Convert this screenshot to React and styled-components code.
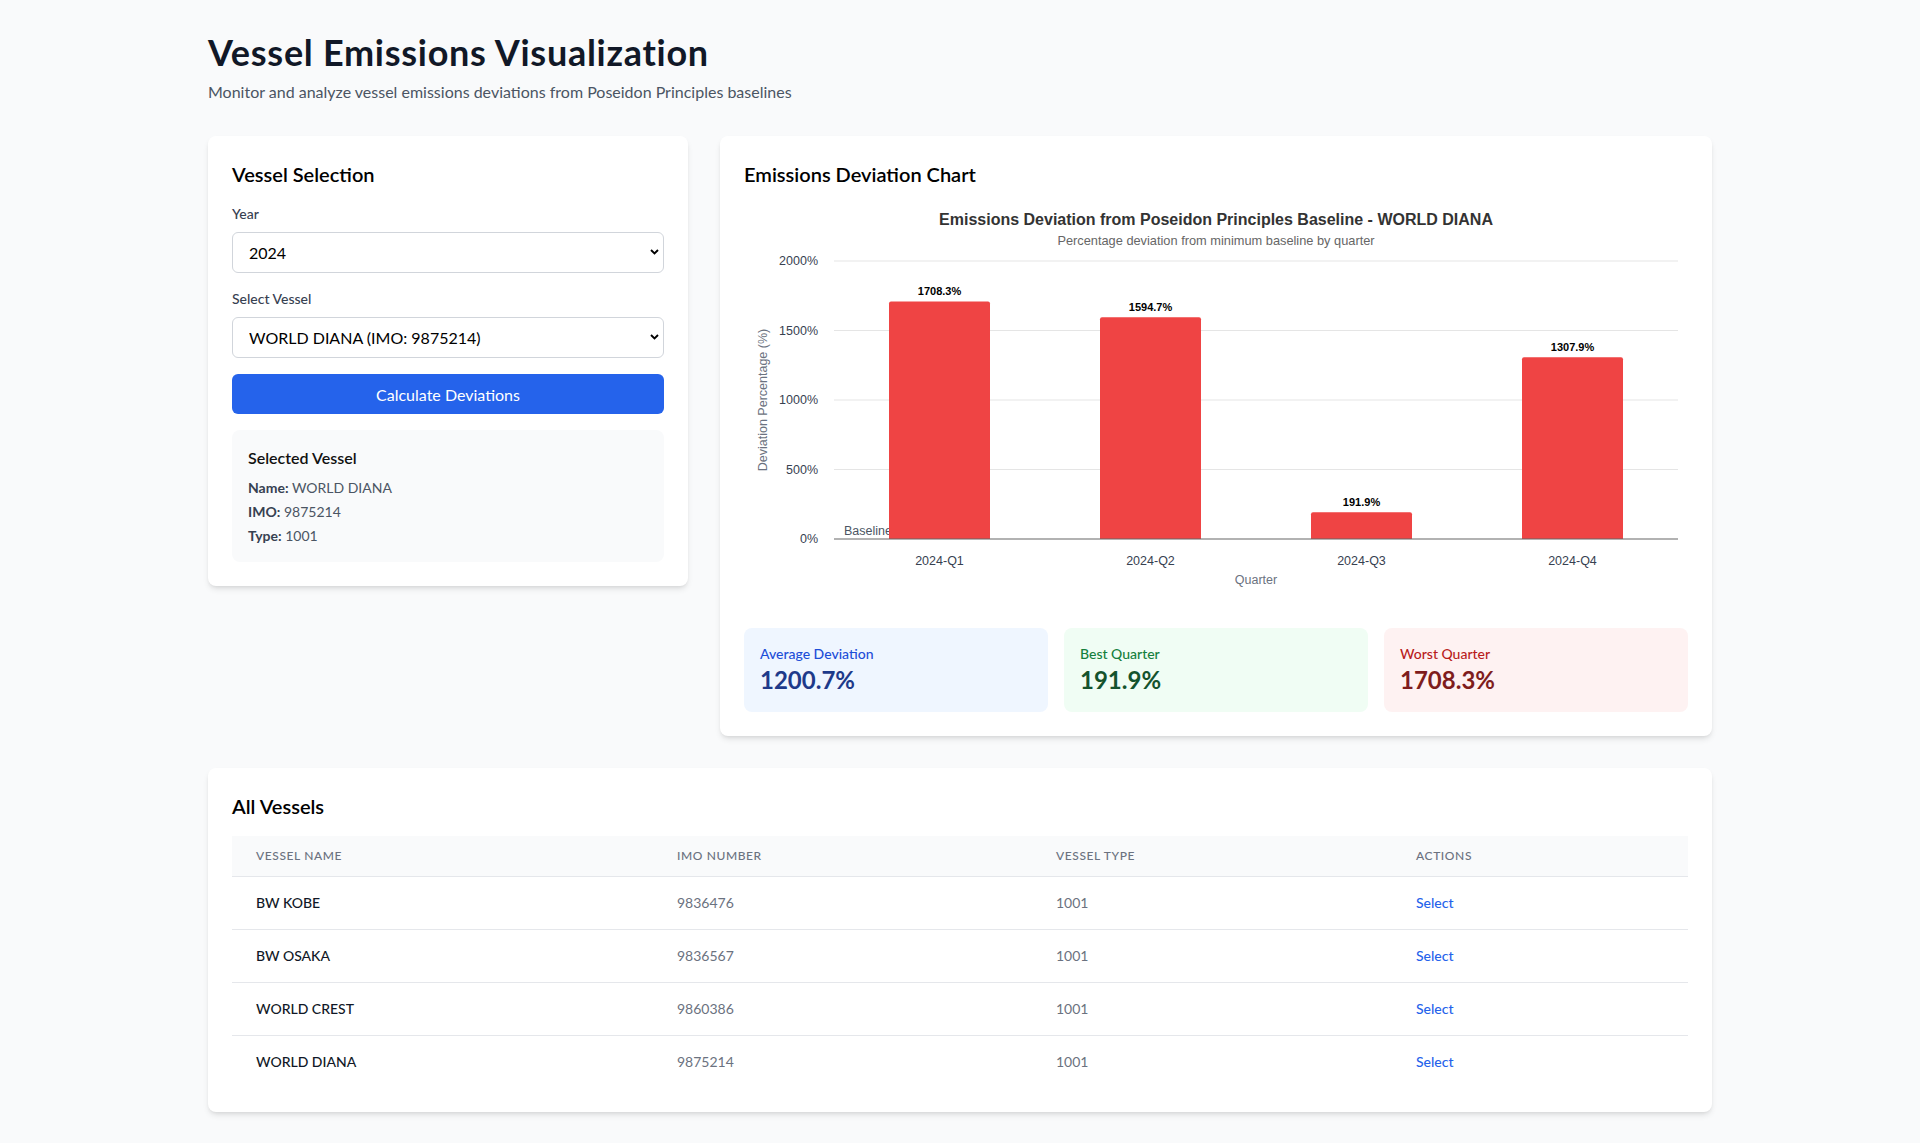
import React from "react";
import styled, { createGlobalStyle } from "styled-components";

const GlobalStyle = createGlobalStyle`
  html, body {
    margin: 0;
    padding: 0;
    background: #f9fafb;
  }
  body {
    font-family: "Segoe UI", Lato, "Liberation Sans", sans-serif;
    color: #111827;
  }
  * {
    box-sizing: border-box;
  }
`;

//Data
const vessels = [
  { name: "BW KOBE", imo: "9836476", type: "1001" },
  { name: "BW OSAKA", imo: "9836567", type: "1001" },
  { name: "WORLD CREST", imo: "9860386", type: "1001" },
  { name: "WORLD DIANA", imo: "9875214", type: "1001" }
];

const deviations = [
  { quarter: "2024-Q1", value: 1708.3 },
  { quarter: "2024-Q2", value: 1594.7 },
  { quarter: "2024-Q3", value: 191.9 },
  { quarter: "2024-Q4", value: 1307.9 }
];

const Page = styled.div`
  min-height: 100vh;
  background: #f9fafb;
`;

const Container = styled.div`
  max-width: 1536px;
  margin: 0 auto;
  padding: 32px 16px;
`;

const Title = styled.h1`
  margin: 0 0 8px;
  font-size: 36px;
  line-height: 40px;
  font-weight: 700;
  letter-spacing: 0.02em;
  color: #111827;
`;

const Subtitle = styled.p`
  margin: 0 0 32px;
  font-size: 16px;
  line-height: 24px;
  color: #4b5563;
`;

const Grid = styled.div`
  display: grid;
  grid-template-columns: repeat(3, minmax(0, 1fr));
  gap: 32px;
  align-items: start;
`;

const Card = styled.section`
  background: #fff;
  border-radius: 8px;
  padding: 24px;
  box-shadow: 0 4px 6px -1px rgba(0, 0, 0, 0.1), 0 2px 4px -2px rgba(0, 0, 0, 0.1);
  grid-column: span ${p => p.$span || 1};
  margin-top: ${p => p.$mt || 0}px;
`;

const CardTitle = styled.h2`
  margin: 0 0 16px;
  font-size: 20px;
  line-height: 28px;
  font-weight: 600;
  color: #000;
`;

const Label = styled.label`
  display: block;
  margin-bottom: 8px;
  font-size: 14px;
  line-height: 20px;
  font-weight: 500;
  color: #374151;
`;

const SelectWrap = styled.div`
  position: relative;
  margin-bottom: 16px;
`;

const Select = styled.select`
  display: block;
  width: 100%;
  height: 41px;
  padding: 0 24px 0 16px;
  border: 1px solid #d1d5db;
  border-radius: 6px;
  background: #fff;
  font-family: inherit;
  font-size: 16px;
  color: #000;
  appearance: none;
  outline: none;
`;

const Chevron = styled.svg`
  position: absolute;
  right: 5px;
  top: 17px;
  pointer-events: none;
`;

const PrimaryButton = styled.button`
  display: block;
  width: 100%;
  height: 40px;
  margin-bottom: 16px;
  border: none;
  border-radius: 6px;
  background: #2563eb;
  color: #fff;
  font-family: inherit;
  font-size: 16px;
  cursor: pointer;
`;

const InfoBox = styled.div`
  background: #f9fafb;
  border-radius: 8px;
  padding: 16px;
`;

const InfoTitle = styled.h3`
  margin: 0 0 8px;
  font-size: 16px;
  line-height: 24px;
  font-weight: 600;
  color: #111;
`;

const InfoLine = styled.p`
  margin: 4px 0 0;
  font-size: 14px;
  line-height: 20px;
  color: #4b5563;

  &:first-of-type {
    margin-top: 0;
  }

  strong {
    font-weight: 700;
    color: #374151;
  }
`;

const ChartBox = styled.div`
  height: 400px;
  margin-bottom: 24px;
`;

const Stats = styled.div`
  display: grid;
  grid-template-columns: repeat(3, minmax(0, 1fr));
  gap: 16px;
`;

const StatBox = styled.div`
  background: ${p => p.$bg};
  border-radius: 8px;
  padding: 16px;
`;

const StatLabel = styled.div`
  font-size: 14px;
  line-height: 20px;
  font-weight: 500;
  color: ${p => p.$color};
`;

const StatValue = styled.div`
  font-size: 24px;
  line-height: 32px;
  font-weight: 700;
  color: ${p => p.$color};
`;

const Table = styled.table`
  width: 100%;
  border-collapse: collapse;
  table-layout: fixed;
`;

const Th = styled.th`
  padding: 12px 24px;
  background: #f9fafb;
  border-bottom: 1px solid #e5e7eb;
  text-align: left;
  font-size: 12px;
  line-height: 16px;
  font-weight: 500;
  color: #6b7280;
  text-transform: uppercase;
  letter-spacing: 0.05em;
`;

const Row = styled.tr`
  & + & td {
    border-top: 1px solid #e5e7eb;
  }
`;

const Td = styled.td`
  padding: 16px 24px;
  font-size: 14px;
  line-height: 20px;
  color: #6b7280;
  white-space: nowrap;
`;

const NameTd = styled(Td)`
  font-weight: 500;
  color: #111827;
`;

const SelectLink = styled.button`
  padding: 0;
  border: none;
  background: none;
  font-family: inherit;
  font-size: 14px;
  line-height: 20px;
  font-weight: 500;
  color: #2563eb;
  cursor: pointer;
`;

const ChartSvg = styled.svg`
  display: block;
  font-family: "Liberation Sans", Arial, sans-serif;
`;

const ChevronIcon = () => (
  <Chevron width="9" height="6" viewBox="0 0 9 6">
    <path d="M1 1l3.5 3.5L8 1" fill="none" stroke="#000" strokeWidth="1.9" />
  </Chevron>
);

const W = 944;
const H = 400;
const plot = { left: 90, right: 934, top: 57, bottom: 335 };
const yMax = 2000;
const yOf = v => plot.bottom - (v / yMax) * (plot.bottom - plot.top);

const barPath = (x, y, w, h, r) =>
  `M${x},${y + h} L${x},${y + r} Q${x},${y} ${x + r},${y} L${x + w - r},${y} Q${x + w},${y} ${x + w},${y + r} L${x + w},${y + h} Z`;

const DeviationChart = ({ data, vesselName }) => {
  const band = (plot.right - plot.left) / data.length;
  const barW = 101;
  return (
    <ChartSvg width={W} height={H} viewBox={`0 0 ${W} ${H}`}>
      <text x={W / 2} y="17" textAnchor="middle" dominantBaseline="middle" fontSize="16" fontWeight="700" fill="#333">
        Emissions Deviation from Poseidon Principles Baseline - {vesselName}
      </text>
      <text x={W / 2} y="38" textAnchor="middle" dominantBaseline="middle" fontSize="12.8" fill="#666">
        Percentage deviation from minimum baseline by quarter
      </text>

      {[0, 500, 1000, 1500, 2000].map(t => (
        <g key={t}>
          {t > 0 && <line x1={plot.left} x2={plot.right} y1={yOf(t)} y2={yOf(t)} stroke="#e5e5e5" strokeWidth="1" />}
          <text x="74" y={yOf(t) + 1} textAnchor="end" dominantBaseline="middle" fontSize="12.5" fill="#374151">
            {t}%
          </text>
        </g>
      ))}

      <text
        transform={`translate(20 ${(plot.top + plot.bottom) / 2}) rotate(-90)`}
        textAnchor="middle"
        dominantBaseline="middle"
        fontSize="12.5"
        fill="#6b7280"
      >
        Deviation Percentage (%)
      </text>

      <text x="100" y="328" dominantBaseline="middle" fontSize="12.5" fill="#4b5563">
        Baseline
      </text>

      {data.map((d, i) => {
        const x = plot.left + band * i + (band - barW) / 2;
        const y = yOf(d.value);
        return (
          <g key={d.quarter}>
            <path d={barPath(x, y, barW, plot.bottom - y, 2)} fill="#ef4444" />
            <text x={x + barW / 2} y={y - 9} textAnchor="middle" dominantBaseline="middle" fontSize="11" fontWeight="700" fill="#000">
              {d.value}%
            </text>
            <text x={x + barW / 2} y="358" textAnchor="middle" dominantBaseline="middle" fontSize="12.5" fill="#374151">
              {d.quarter}
            </text>
          </g>
        );
      })}

      <line x1={plot.left} x2={plot.right} y1={plot.bottom} y2={plot.bottom} stroke="#666" strokeWidth="1.2" />

      <text x={(plot.left + plot.right) / 2} y="377" textAnchor="middle" dominantBaseline="middle" fontSize="12.5" fill="#6b7280">
        Quarter
      </text>
    </ChartSvg>
  );
};

const App = () => {
  const selected = vessels[3];
  const values = deviations.map(d => d.value);
  const avg = values.reduce((a, b) => a + b, 0) / values.length;

  return (
    <Page>
      <GlobalStyle />
      <Container>
        <Title>Vessel Emissions Visualization</Title>
        <Subtitle>Monitor and analyze vessel emissions deviations from Poseidon Principles baselines</Subtitle>

        <Grid>
          <Card>
            <CardTitle>Vessel Selection</CardTitle>
            <Label htmlFor="year">Year</Label>
            <SelectWrap>
              <Select id="year" defaultValue="2024">
                <option value="2024">2024</option>
                <option value="2023">2023</option>
              </Select>
              <ChevronIcon />
            </SelectWrap>

            <Label htmlFor="vessel">Select Vessel</Label>
            <SelectWrap>
              <Select id="vessel" defaultValue={selected.imo}>
                {vessels.map(v => (
                  <option key={v.imo} value={v.imo}>
                    {v.name} (IMO: {v.imo})
                  </option>
                ))}
              </Select>
              <ChevronIcon />
            </SelectWrap>

            <PrimaryButton>Calculate Deviations</PrimaryButton>

            <InfoBox>
              <InfoTitle>Selected Vessel</InfoTitle>
              <InfoLine><strong>Name:</strong> {selected.name}</InfoLine>
              <InfoLine><strong>IMO:</strong> {selected.imo}</InfoLine>
              <InfoLine><strong>Type:</strong> {selected.type}</InfoLine>
            </InfoBox>
          </Card>

          <Card $span={2}>
            <CardTitle>Emissions Deviation Chart</CardTitle>
            <ChartBox>
              <DeviationChart data={deviations} vesselName={selected.name} />
            </ChartBox>
            <Stats>
              <StatBox $bg="#eff6ff">
                <StatLabel $color="#1d4ed8">Average Deviation</StatLabel>
                <StatValue $color="#1e3a8a">{avg.toFixed(1)}%</StatValue>
              </StatBox>
              <StatBox $bg="#f0fdf4">
                <StatLabel $color="#15803d">Best Quarter</StatLabel>
                <StatValue $color="#14532d">{Math.min(...values).toFixed(1)}%</StatValue>
              </StatBox>
              <StatBox $bg="#fef2f2">
                <StatLabel $color="#b91c1c">Worst Quarter</StatLabel>
                <StatValue $color="#7f1d1d">{Math.max(...values).toFixed(1)}%</StatValue>
              </StatBox>
            </Stats>
          </Card>
        </Grid>

        <Card $mt={32}>
          <CardTitle>All Vessels</CardTitle>
          <Table>
            <colgroup>
              <col style={{ width: 421 }} />
              <col style={{ width: 379 }} />
              <col style={{ width: 360 }} />
              <col />
            </colgroup>
            <thead>
              <tr>
                <Th>Vessel Name</Th>
                <Th>IMO Number</Th>
                <Th>Vessel Type</Th>
                <Th>Actions</Th>
              </tr>
            </thead>
            <tbody>
              {vessels.map(v => (
                <Row key={v.imo}>
                  <NameTd>{v.name}</NameTd>
                  <Td>{v.imo}</Td>
                  <Td>{v.type}</Td>
                  <Td><SelectLink>Select</SelectLink></Td>
                </Row>
              ))}
            </tbody>
          </Table>
        </Card>
      </Container>
    </Page>
  );
};

export default App;
